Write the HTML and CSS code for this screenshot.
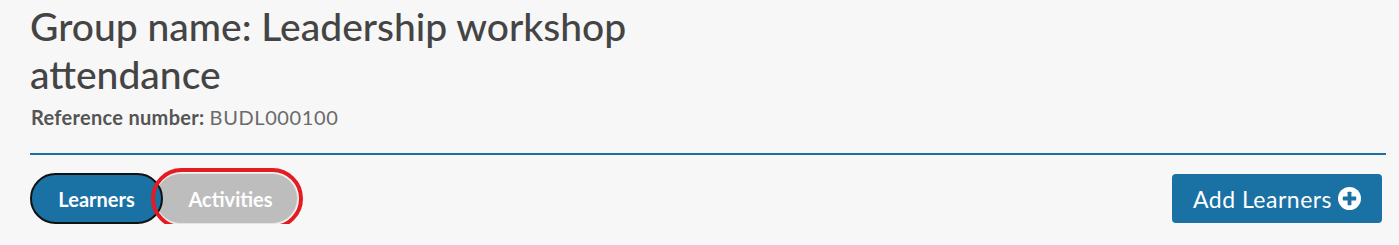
FILE: index.html
```html
<!DOCTYPE html>
<html lang="en">
<head>
<meta charset="utf-8">
<title>Group</title>
<link rel="stylesheet" href="styles.css">
</head>
<body>
<div class="page">
  <header class="group-header">
    <h1 class="group-title">Group name: Leadership workshop<br>attendance</h1>
    <p class="ref"><span class="ref-label">Reference number:</span> <span class="ref-value">BUDL000100</span></p>
  </header>
  <div class="toolbar">
    <div class="tabs">
      <button class="tab tab-active">Learners</button>
      <button class="tab tab-inactive">Activities</button>
    </div>
    <button class="add-btn">Add Learners
      <svg class="add-icon" viewBox="0 0 24 24" width="23" height="23" aria-hidden="true">
        <circle cx="12" cy="12" r="12" fill="#ffffff"/>
        <rect x="10" y="5" width="4" height="14" rx="0.5" fill="#1a71a4"/>
        <rect x="5" y="10" width="14" height="4" rx="0.5" fill="#1a71a4"/>
      </svg>
    </button>
  </div>
</div>
</body>
</html>
```

FILE: styles.css
```css
html, body {
  margin: 0;
  padding: 0;
  background: #f7f7f7;
}
body {
  font-family: Lato, "Noto Sans", sans-serif;
  color: #454545;
}
.page {
  margin: 0 13px 0 30px;
  padding-top: 2px;
}
.group-title {
  margin: 0;
  font-family: Lato, "Noto Sans", sans-serif;
  font-weight: 500;
  font-size: 39px;
  line-height: 48px;
  color: #444444;
}
.ref {
  margin: 6px 0 0 1px;
  font-size: 20px;
  line-height: 26px;
}
.ref-label {
  font-weight: 700;
  color: #555555;
  letter-spacing: 0.3px;
}
.ref-value {
  color: #6a6a6a;
  letter-spacing: 0.6px;
}
.group-header {
  padding-bottom: 23px;
  border-bottom: 2px solid #1a6fa3;
}
.toolbar {
  display: flex;
  justify-content: space-between;
  align-items: center;
  padding-top: 18px;
}
.tabs {
  display: flex;
  align-items: center;
}
.tab {
  box-sizing: border-box;
  font-family: Lato, "Noto Sans", sans-serif;
  font-weight: 700;
  font-size: 20px;
  color: #ffffff;
  height: 51px;
  border-radius: 26px;
  cursor: pointer;
  padding: 0;
}
.tab-active {
  position: relative;
  z-index: 1;
  width: 133px;
  background: #1a71a4;
  border: 2px solid #111111;
}
.tab-inactive {
  position: relative;
  width: 143px;
  margin-left: -8px;
  padding-left: 8px;
  background: #bdbdbd;
  border: 1px solid #e4e4e4;
  height: 51px;
}
.tab-inactive::after {
  content: "";
  position: absolute;
  z-index: 2;
  left: -5px;
  top: -6px;
  right: -6px;
  bottom: -6px;
  border: 4px solid #e31b23;
  border-radius: 31px;
}
.add-btn {
  box-sizing: border-box;
  display: flex;
  align-items: center;
  justify-content: center;
  gap: 6px;
  height: 49px;
  width: 210px;
  margin-right: 4px;
  padding: 0;
  background: #1a71a4;
  color: #ffffff;
  border: none;
  border-radius: 4px;
  font-family: Lato, "Noto Sans", sans-serif;
  font-size: 23px;
  letter-spacing: 0.5px;
  font-weight: 400;
  cursor: pointer;
}
.add-icon {
  flex: none;
}
```
